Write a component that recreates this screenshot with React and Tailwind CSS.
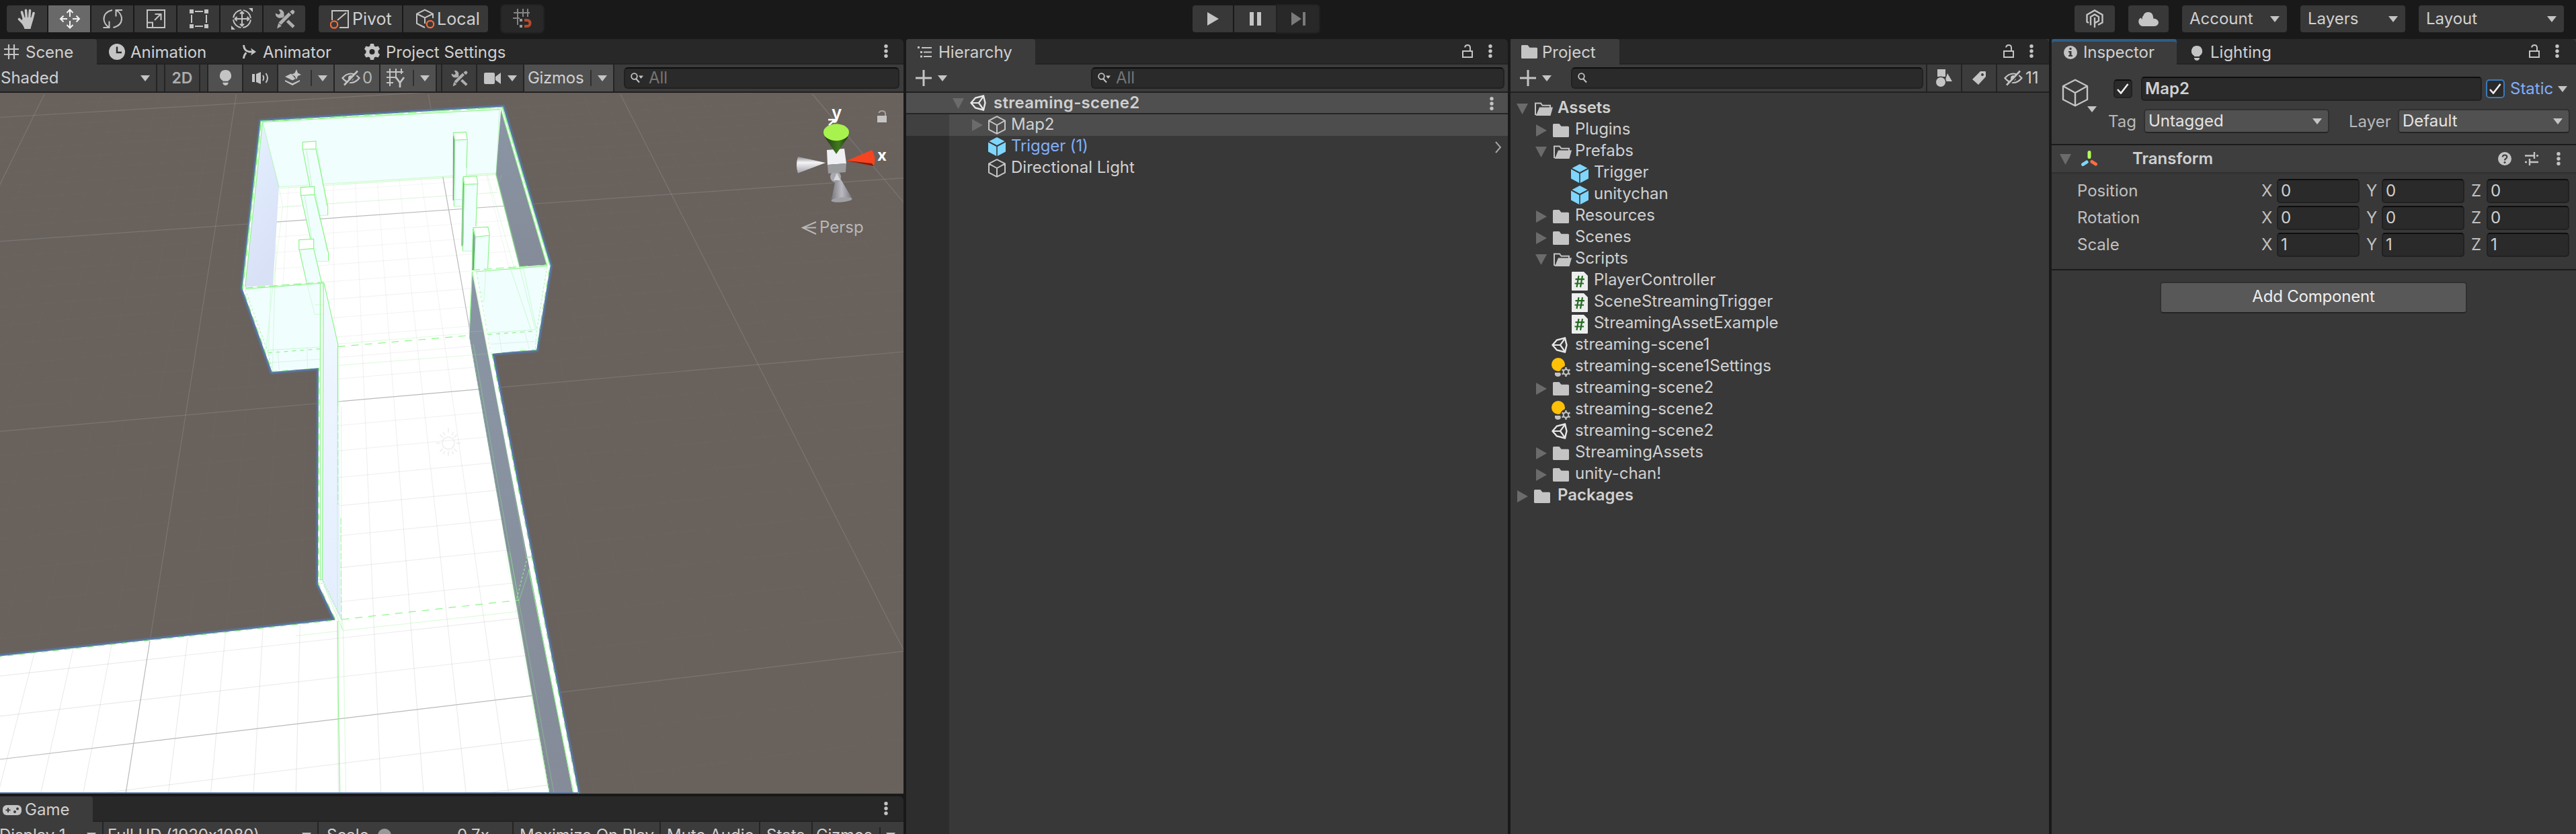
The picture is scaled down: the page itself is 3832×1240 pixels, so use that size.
import React from "react";

/* ---------- icons ---------- */
const Svg = ({ w, h, vb, className = "", children }) => (
  <svg width={w} height={h} viewBox={vb || `0 0 ${w} ${h}`} className={"shrink-0 " + className} fill="none">
    {children}
  </svg>
);
const C = "#c4c4c4";

const Down = ({ className = "" }) => (
  <Svg w={14} h={9} className={className}><path d="M0 0H14L7 9Z" fill={C} /></Svg>
);
const Dots = ({ className = "" }) => (
  <Svg w={6} h={20} className={className}>
    <circle cx="3" cy="2.7" r="2.7" fill={C} /><circle cx="3" cy="10" r="2.7" fill={C} /><circle cx="3" cy="17.3" r="2.7" fill={C} />
  </Svg>
);
const Lock = ({ className = "" }) => (
  <Svg w={16} h={20} className={className}>
    <rect x="1" y="10" width="14" height="9" stroke={C} strokeWidth="2" />
    <path d="M4 4.500C4.500 2 6 1 8 1C10.500 1 12 2.500 12 5V10" stroke={C} strokeWidth="2" />
  </Svg>
);
const FoldOpen = ({ className = "" }) => (
  <Svg w={17} h={16} className={className}><path d="M0 0H17L8.500 16Z" fill="#6b6b6b" /></Svg>
);
const FoldClosed = ({ className = "" }) => (
  <Svg w={16} h={18} className={className}><path d="M0 0L16 9L0 18Z" fill="#6b6b6b" /></Svg>
);
const Folder = ({ className = "" }) => (
  <Svg w={24} h={20} className={className}>
    <path d="M1.500 0H9.500L12.500 3.800H22.500Q24 3.800 24 5.300V18.500Q24 20 22.500 20H1.500Q0 20 0 18.500V1.500Q0 0 1.500 0Z" fill={C} />
  </Svg>
);
const FolderOpen = ({ className = "" }) => (
  <Svg w={27} h={20} className={className}>
    <path d="M1 19V1.500H9L11.500 4.800H23V8" stroke={C} strokeWidth="2" />
    <path d="M7 7.500H27L23.500 20H1.500Z" fill={C} />
    <path d="M2.600 17L6 7.500" stroke="#383838" strokeWidth="1" />
  </Svg>
);
const CubeLine = ({ w = 26, h = 28, s = 2, className = "" }) => (
  <svg width={w} height={h} viewBox="0 0 26 28" fill="none" className={"shrink-0 " + className}>
    <path d="M13 1.200L25 7.300V20.700L13 26.800L1 20.700V7.300Z M1 7.300L13 14L25 7.300 M13 14V26.800" stroke={C} strokeWidth={s} strokeLinejoin="round" />
  </svg>
);
const CubeBlue = ({ className = "" }) => (
  <Svg w={26} h={28} className={className}>
    <path d="M13 0L24.500 6L13 12L1.500 6Z M0 7.500L12.200 14V28L0 21.500Z M26 7.500L13.800 14V28L26 21.500Z" fill="#7fd6fd" />
  </Svg>
);
const UnityMark = ({ className = "" }) => (
  <Svg w={24} h={24} className={className}>
    <path d="M1.500 12L8 4.500L20 1.500L22.500 12L20 22.500L8 19.500Z" stroke="#e8e8e8" strokeWidth="2.400" />
    <path d="M1 12H13L20.500 1.500M13 12L20.500 22.500" stroke="#e8e8e8" strokeWidth="2.200" />
  </Svg>
);
const Script = ({ className = "" }) => (
  <Svg w={24} h={28} className={className}>
    <path d="M1 0H18L24 6V27Q24 28 23 28H1Q0 28 0 27V1Q0 0 1 0Z" fill="#eeeeee" />
    <path d="M10.500 6L7.500 23M16 6L13 23M5.500 11.200H19M4.500 17.500H18" stroke="#236b23" strokeWidth="2.200" />
  </Svg>
);
const BulbGear = ({ className = "" }) => (
  <Svg w={28} h={28} className={className}>
    <circle cx="10" cy="10" r="10" fill="#ffc107" />
    <path d="M5 22H14V25Q13 28 9.500 28Q6 28 5 25Z" fill={C} />
    <circle cx="21.500" cy="21" r="8.500" fill="#383838" />
    <circle cx="21.500" cy="21" r="3.800" stroke={C} strokeWidth="2" />
    <path d="M21.500 14V17M21.500 25V28M15.500 17.500L18 19M25 23L27.500 24.500M15.500 24.500L18 23M25 19L27.500 17.500" stroke={C} strokeWidth="2.400" />
  </Svg>
);
const Bulb = ({ w = 16, h = 22, className = "" }) => (
  <svg width={w} height={h} viewBox="0 0 16 22" className={"shrink-0 " + className}>
    <path d="M8 0A8 8 0 0 1 12 15V16H4V15A8 8 0 0 1 8 0ZM4 18H12V19Q11 22 8 22Q5 22 4 19Z" fill={C} />
  </svg>
);
const Plus = ({ className = "" }) => (
  <Svg w={24} h={24} className={className}><path d="M12 0V24M0 12H24" stroke={C} strokeWidth="3" /></Svg>
);
const Glass = ({ drop = false, className = "" }) => (
  <Svg w={19} h={16} className={className}>
    <circle cx="5.500" cy="5.500" r="4.300" stroke={C} strokeWidth="1.800" />
    <path d="M8 9L13 14.500" stroke={C} strokeWidth="2" />
    {drop && <path d="M12 4.500H19L15.500 9Z" fill={C} />}
  </Svg>
);
const EyeOff = ({ bg = "#505050", className = "" }) => (
  <Svg w={28} h={24} className={className}>
    <path d="M1.500 12Q7 5.500 14 5.500Q21 5.500 26.500 12Q21 19 14 19Q7 19 1.500 12Z" stroke={C} strokeWidth="2.200" />
    <circle cx="14" cy="12" r="4" fill={C} />
    <path d="M6 23.500L25.500 3" stroke={bg} strokeWidth="2.500" />
    <path d="M4 22.500L24 1.500" stroke={C} strokeWidth="2.600" />
  </Svg>
);
const Tools = ({ w = 29, h = 29, bg = "#383838", className = "" }) => (
  <svg width={w} height={h} viewBox="0 0 29 29" fill="none" className={"shrink-0 " + className}>
    <path d="M9 9L27 26" stroke="#aeaeae" strokeWidth="4.600" />
    <path d="M5.500 1.200A6.200 6.200 0 1 1 .8 6.500L5.500 8.500L8 6Z" fill="#aeaeae" />
    <path d="M26 4L6 23.500" stroke={bg} strokeWidth="8" />
    <path d="M21.500 7L7 21.500" stroke="#aeaeae" strokeWidth="5" />
    <path d="M23.500 2.500L26 1.500L28.500 4L27.500 6.500L25.500 8.500L21.500 4.500ZM5 20.500L9.500 25L3 28.500Z" fill="#aeaeae" />
  </svg>
);
const Bar = ({ className = "" }) => <div className={"w-[2px] shrink-0 self-stretch bg-[#242424] " + className} />;

/* ---------- small building blocks ---------- */
const Tab = ({ className = "", children }) => (
  <div className={"flex h-[38px] shrink-0 items-center rounded-t-[4px] bg-[#3c3c3c] " + className}>{children}</div>
);
const TabStrip = ({ className = "", children }) => (
  <div className={"flex h-[38px] shrink-0 items-start rounded-t-[6px] bg-[#282828] shadow-[inset_0_-2px_0_#232323] " + className}>{children}</div>
);
const Search = ({ className = "", children }) => (
  <div className={"flex h-[32px] items-center rounded-[6px] border-2 border-[#212121] border-t-[#0d0d0d] bg-[#2a2a2a] " + className}>{children}</div>
);
const Field = ({ className = "", children }) => (
  <div className={"flex items-center rounded-[5px] border-2 border-[#212121] border-t-[#0d0d0d] bg-[#2a2a2a] " + className}>{children}</div>
);
const Tool = ({ className = "", children }) => (
  <div className={"flex h-[40px] items-center justify-center " + className}>{children}</div>
);
const TopMenu = ({ className = "", children }) => (
  <div className={"flex h-[40px] items-center justify-between rounded-[4px] bg-[#383838] px-[11px] " + className}>
    <span>{children}</span><Down />
  </div>
);

/* ---------- top toolbar ---------- */
function TopBar() {
  return (
    <div className="flex h-[58px] shrink-0 items-start bg-[#191919] pt-[8px]">
      <div className="ml-[10px] flex w-[444px] shrink-0 gap-[2px]">
        <Tool className="w-[60px] rounded-l-[4px] bg-[#383838]">
          <Svg w={28} h={30} className="-mt-px">
            <g stroke={C} strokeWidth="3.600" strokeLinecap="round"><path d="M6.500 5L10 17M12.500 2.300L13.500 15M18.500 2.500L17.500 15M24 6.500L21 18M2.500 15.500L9 22" /></g>
            <path d="M8.500 13H22.500L22 21Q20 27 19.500 30H10.500Q9.500 26 5 20Z" fill={C} />
          </Svg>
        </Tool>
        <Tool className="w-[62px] bg-[#696969]">
          <Svg w={32} h={30} className="ml-[2px]">
            <path d="M16 2V12M16 18V28M2 15H12M20 15H30M11.500 6L16 1.500L20.500 6M11.500 24L16 28.500L20.500 24M6.500 10.500L2 15L6.500 19.500M25.500 10.500L30 15L25.500 19.500" stroke="#f2f2f2" strokeWidth="2" />
          </Svg>
        </Tool>
        <Tool className="w-[62px] bg-[#383838]">
          <Svg w={30} h={28} className="ml-[2px]">
            <path d="M14 1Q1.500 4 1.500 14.500Q2 22 9 26.500M15.500 27Q28 24 28 13.500Q27.500 6 20.500 1.500M.5 27H9.500V17.500M29 1H19.500V10.500" stroke={C} strokeWidth="2" />
          </Svg>
        </Tool>
        <Tool className="w-[62px] bg-[#383838]">
          <Svg w={28} h={28} className="ml-[2px]">
            <path d="M1 1H27V27H1ZM1 19.500H9V27M12 16L21 7M12.500 7H21.500V16" stroke={C} strokeWidth="2" />
          </Svg>
        </Tool>
        <Tool className="w-[62px] bg-[#383838]">
          <Svg w={28} h={28} className="ml-[2px]">
            <path d="M0 0H6V6H0ZM22 0H28V6H22ZM0 22H6V28H0ZM22 22H28V28H22Z" fill={C} />
            <path d="M8 3H20M8 25H20M3 8V20M25 8V20" stroke={C} strokeWidth="2" />
          </Svg>
        </Tool>
        <Tool className="w-[62px] bg-[#383838]">
          <Svg w={32} h={32} className="ml-[2px]">
            <circle cx="16" cy="16" r="13" stroke={C} strokeWidth="2" strokeDasharray="17.400 3" strokeDashoffset="-1.500" />
            <path d="M16 6V26M6 16H26M13 8.500L16 5.500L19 8.500M13 23.500L16 26.500L19 23.500M8.500 13L5.500 16L8.500 19M23.500 13L26.500 16L23.500 19" stroke={C} strokeWidth="2" />
            <path d="M26 0H32V6ZM0 26V32H6Z" fill={C} />
          </Svg>
        </Tool>
        <Tool className="w-[62px] rounded-r-[4px] bg-[#383838]"><Tools w={30} h={30} className="ml-[2px]" /></Tool>
      </div>
      <div className="ml-[20px] flex shrink-0 gap-[2px]">
        <Tool className="w-[124px] rounded-l-[4px] bg-[#383838] text-[25px] leading-[40px]">
          <Svg w={30} h={29} className="ml-[3px]">
            <path d="M3 16V2H27V27H14M11 16L24 5" stroke={C} strokeWidth="2" />
            <circle cx="6" cy="22.500" r="5.200" stroke="#f76b3c" strokeWidth="2.200" />
          </Svg>
          <span className="ml-[3px] w-[60px]">Pivot</span>
        </Tool>
        <Tool className="w-[126px] rounded-r-[4px] bg-[#383838] text-[25px] leading-[40px]">
          <Svg w={30} h={30} className="ml-[4px]">
            <path d="M14 28L2 22V7.500L14 1.500L26 7.500V14M2 7.500L14 13.500L26 7.500M14 13.500V22" stroke={C} strokeWidth="2" />
            <circle cx="22" cy="23" r="5.200" stroke="#f76b3c" strokeWidth="2.200" />
          </Svg>
          <span className="ml-[2px] w-[62px]">Local</span>
        </Tool>
      </div>
      <Tool className="ml-[20px] w-[62px] rounded-[5px] bg-[#282828] shadow-[0_0_0_2px_#212121]">
        <Svg w={28} h={30}>
          <path d="M7 0V24M15 0V12M22 0V12M1 6H25M0 14H10" stroke="#848484" strokeWidth="2" />
          <path d="M17 17H20.500Q25.500 17 25.500 21.500Q25.500 26 20.500 26H17" stroke="#b5492d" strokeWidth="4" />
          <path d="M10 15H14V19H10ZM10 24H14V28H10Z" fill="#9a9a9a" />
        </Svg>
      </Tool>

      <div className="ml-[966px] flex shrink-0 gap-[2px]">
        <Tool className="w-[60px] rounded-l-[4px] bg-[#383838]"><Svg w={17} h={20}><path d="M0 0L17 10L0 20Z" fill={C} /></Svg></Tool>
        <Tool className="w-[62px] bg-[#383838]"><Svg w={17} h={20}><path d="M0 0H6V20H0ZM11 0H17V20H11Z" fill={C} /></Svg></Tool>
        <Tool className="w-[62px] rounded-r-[4px] bg-[#282828] shadow-[0_0_0_2px_#212121]"><Svg w={21} h={20}><path d="M0 0L15 10L0 20ZM17 0H21V20H17Z" fill="#7a7a7a" /></Svg></Tool>
      </div>

      <div className="ml-auto mr-[18px] flex shrink-0 gap-[20px]">
        <Tool className="w-[60px] rounded-[4px] bg-[#383838]">
          <Svg w={26} h={28}>
            <path d="M4 20L1.500 18.500V8L13 1.500L24.500 8V19.500L18 23M7 23.500V11L13 7.500L19 11V17L13 20.500V27M13 20.500V12" stroke={C} strokeWidth="2.400" />
          </Svg>
        </Tool>
        <Tool className="w-[60px] rounded-[4px] bg-[#383838]">
          <Svg w={30} h={21}><path d="M7 21A7 7 0 0 1 3 8.500Q5 9 6 11Q5 7 7.500 5Q9 0 15 0Q21 0 22 7Q22.500 8.500 22 9.500Q30 10 30 16Q29 21 23 21Z" fill={C} /></Svg>
        </Tool>
        <TopMenu className="w-[156px]">Account</TopMenu>
        <TopMenu className="w-[156px]">Layers</TopMenu>
        <TopMenu className="w-[216px]">Layout</TopMenu>
      </div>
    </div>
  );
}

/* ---------- scene drawing ---------- */
const longitudes = Array.from({ length: 62 }, (_, i) => i - 16).map((k) => ({
  major: k % 10 === 0, x1: 410 + 33.3 * k, y1: 0, x2: 218 + 73.8 * k, y2: 1568,
}));
const latitudes = Array.from({ length: 38 }, (_, i) => (i - 1) / 10).map((k, i) => ({
  major: (i - 1) % 10 === 0,
  x1: 0, y1: (52 + 220.7 * k) / (1 - 0.1737 * k),
  x2: 1567, y2: (-66.8 + 222 * k) / (1 - 0.1734 * k),
}));
const gridLines = [...longitudes, ...latitudes];

const Poly = ({ p, ...rest }) => <polygon points={p} vectorEffect="non-scaling-stroke" {...rest} />;
const Edge = ({ d, o = 1, dash, w = 1.2 }) => (
  <path d={d} stroke="#8df58a" strokeWidth={w} opacity={o} strokeDasharray={dash} fill="none" vectorEffect="non-scaling-stroke" />
);
const GRAY = "url(#grayWall)";
const ICE = "#f1fefe";

function SceneView() {
  const outline = "453,61 872,29 954,385 930,573 853,580 1003,1569 -4,1569 -4,1261 582,1179 552,1098 553,613 472,622 421,437";
  return (
    <div className="relative h-[1042px] w-[1344px] shrink-0 overflow-hidden bg-[#69615c]">
      <svg width="1344" height="1042" viewBox="0 -3 1567 1571" preserveAspectRatio="none" className="block">
        <defs>
          <clipPath id="floor">
            <polygon points="482,209 862,178 902,385 820,398 815,545 953,1568 0,1568 0,1262 582,1180 590,1178 586,566 560,424 474,430" />
          </clipPath>
          <linearGradient id="gridFade" gradientUnits="userSpaceOnUse" x1="0" y1="180" x2="0" y2="1568">
            <stop offset="0" stopColor="#000" stopOpacity="0.035" /><stop offset="0.5" stopColor="#000" stopOpacity="0.065" /><stop offset="1" stopColor="#000" stopOpacity="0.09" />
          </linearGradient>
          <linearGradient id="leftWall" x1="0" y1="0" x2="0.3" y2="1">
            <stop offset="0" stopColor="#e9f6ff" /><stop offset="0.4" stopColor="#e0eafd" /><stop offset="1" stopColor="#d8e1f5" />
          </linearGradient>
          <linearGradient id="hall" x1="0" y1="0" x2="0" y2="1">
            <stop offset="0" stopColor="#f2fdff" /><stop offset="0.3" stopColor="#ecf5ff" /><stop offset="1" stopColor="#e4edfe" />
          </linearGradient>
          <linearGradient id="grayWall" x1="0" y1="0" x2="0" y2="1">
            <stop offset="0" stopColor="#8a96a5" /><stop offset="1" stopColor="#858b98" />
          </linearGradient>
        </defs>
        <g>
          {gridLines.map((l, i) => (
            <line key={i} x1={l.x1} y1={l.y1} x2={l.x2} y2={l.y2} stroke="#8a8b8a" strokeWidth={l.major ? 1.2 : 1} opacity={l.major ? 0.5 : 0.07} vectorEffect="non-scaling-stroke" />
          ))}
        </g>
        <Poly p={outline} fill="#fff" stroke="#5b769f" strokeWidth="9" strokeLinejoin="round" opacity="0.35" />
        <Poly p={outline} fill="#fff" stroke="#5875a2" strokeWidth="6.500" strokeLinejoin="round" />
        <Poly p={outline} fill="#fff" stroke="#fff" strokeWidth="0.800" />
        <Poly p={outline} fill="none" stroke="#7fe07c" strokeWidth="1.300" strokeDasharray="9 8" />

        <g clipPath="url(#floor)">
          {gridLines.map((l, i) => (
            <line key={i} x1={l.x1} y1={l.y1} x2={l.x2} y2={l.y2} stroke={l.major ? "#b9b9b9" : "url(#gridFade)"} strokeWidth={l.major ? 1.2 : 1.1} vectorEffect="non-scaling-stroke" />
          ))}
        </g>

        {/* upper room */}
        <g transform="matrix(0.3886 0 0 0.50257 408.03 15.08)">
          <Poly p="122,94 1180,38 1165,322 195,384" fill={ICE} />
          <Poly p="122,100 195,384 168,822 44,830" fill="url(#leftWall)" />
          <Poly p="1186,42 1390,732 1268,740 1163,328" fill={GRAY} />
          <Edge d="M195 384L1165 322M200 390L1165 328" o={0.4} />
          <Edge d="M210 472L1168 408M195 384L212 472L170 820M1165 322L1345 1020M1125 330L1325 1020M1163 400L1190 330" o={0.2} />
          <Edge d="M122 94L195 384M1180 38L1165 322" o={0.5} />
          <Edge d="M1163 328L1268 738" o={0.7} />
          <Edge d="M112 90L1192 30" dash="13 9" />
          <Edge d="M122 94L1180 38M122 94L44 830M114 90L32 836M1185 35L1392 735M1192 30L1406 738" />

          <Poly p="301,184 360,180 360,214 301,216" fill="#fff" />
          <Poly p="302,216 360,214 412,510 361,511" fill={ICE} />
          <Edge d="M301 184L360 180V214L300 216ZM301 216L334 384M360 214L413 470V510" />
          <Edge d="M318 220L361 511H412M366 214L408 470" o={0.4} />
          <Poly p="292,422 353,418 416,713 358,716 335,616" fill={ICE} />
          <Poly p="292,386 353,382 353,418 292,422" fill="#fff" />
          <Edge d="M292 386L353 382V418L293 422ZM293 422L336 616M353 418L416 680V713" />
          <Edge d="M310 424L358 716H416M358 414L410 670" o={0.4} />
          <Poly p="286,664 350,658 385,808 318,808" fill={ICE} />
          <Poly p="284,620 350,616 350,658 285,664" fill="#fff" />
          <Edge d="M284 620L350 616V658L285 664ZM286 664L318 808M350 658L385 808" />

          <Poly p="980,175 1036,172 1030,466 976,470" fill={ICE} />
          <Poly p="973,142 1030,139 1036,172 980,175" fill="#fff" />
          <Poly p="972,150 980,175 978,440 971,445" fill={GRAY} />
          <Edge d="M973 142L1030 139L1036 172L980 175ZM980 175L976 470M1036 172L1032 300" />
          <Edge d="M976 470H1012M1032 300L1028 466M976 440H1010" o={0.45} />
          <Poly p="1022,373 1083,370 1068,668 1015,670" fill={ICE} />
          <Poly p="1018,338 1077,335 1083,370 1022,373" fill="#fff" />
          <Poly p="1015,340 1022,373 1018,640 1010,650" fill={GRAY} />
          <Edge d="M1018 338L1077 335L1083 370L1022 373ZM1022 373L1015 670M1081 370L1074 560M1016 345L1010 640" />
          <Edge d="M1015 670H1058" o={0.45} />
          <Poly p="1072,607 1136,600 1125,748 1062,755" fill={ICE} />
          <Poly p="1062,566 1128,562 1136,600 1072,607" fill="#fff" />
          <Poly p="1060,570 1070,607 1066,752 1056,755" fill={GRAY} />
          <Edge d="M1062 566L1128 562L1136 600L1072 607ZM1072 607L1066 750M1134 600L1127 748M1061 570L1057 750" />

          <Poly p="44,838 380,816 378,1190 165,1205" fill={ICE} />
          <Poly p="1072,762 1392,736 1345,1105 1145,1128" fill={ICE} />
          <Edge d="M318 808L355 952H414M385 808L414 948M355 910H412" o={0.25} />
          <Edge d="M1118 752L1110 894H1068M1060 855H1108" o={0.25} />
          <Edge d="M168 822L137 1110M158 830L148 1120M182 640L166 1200" o={0.25} />
          <Edge d="M1268 738L1340 1020M1283 738L1345 1020M1225 738L1320 1020" o={0.3} />
          <Edge d="M44 834L396 808" dash="12 6" /><Edge d="M46 838L396 813" />
          <Edge d="M1056 755L1392 731" dash="12 6" /><Edge d="M1072 762L1392 736" />
          <Edge d="M44 842L146 1122L165 1205M1392 740L1345 1025L1340 1108" o={0.6} dash="3 3" />
          <Edge d="M146 1112L378 1098M1128 1035L1340 1020" o={0.35} />
          <Edge d="M146 1124L378 1106M1128 1042L1340 1027" dash="6 6" />
          <path d="M190 1110L196 1200M320 1100L323 1190M150 1168L378 1152M1175 1030L1190 1120M1290 1022L1312 1108M1140 1085L1345 1072" stroke="#000" opacity="0.06" vectorEffect="non-scaling-stroke" />
        </g>

        {/* corridor */}
        <Poly p="561,426 586,566 591,1178 558,1092" fill="url(#hall)" />
        <Poly p="819,400 814,545 953,1569 994,1569" fill={GRAY} />
        <Edge d="M555.500 424V1090M561 424L559 1090M562 424L586 560V700" />
        <Edge d="M586 700V920M591 950L592 1178" o={0.7} dash="10 3" />
        <Edge d="M585 570V1170M592 700V1200" o={0.25} />
        <Edge d="M586 566L814 541" dash="11 9" />
        <Edge d="M586 608L845 582M586 560L814 536M814 533L845 530" o={0.25} />
        <Edge d="M819 398L814 535" />
        <Edge d="M814 540L894 1134M827 400L851 580" o={0.5} dash="3 4" />
        <Edge d="M821 560L900 1140M820 398L913 1040" o={0.35} />
        <g transform="matrix(0.3886 0 0 0.50257 512.95 1025.2)">
          <Edge d="M1034 25L985 215" dash="3 3" />
          <Edge d="M1030 25H1052M985 217H998" />
          <Edge d="M1044 75L998 215" o={0.4} />
          <Edge d="M205 303L985 218" dash="11 9" />
          <Edge d="M210 353L985 268L998 225M0 376L188 355" o={0.28} />
          <Edge d="M188 310L190 650L197 1080" />
          <Edge d="M207 300L212 353L224 1080" o={0.28} />
          <Edge d="M118 122L205 303M100 125H120M100 142H118" o={0.8} dash="2 2" />
          <Edge d="M125 150L210 350" o={0.4} />
          <Edge d="M955 0L1153 1080" o={0.32} />
          <Edge d="M945 0L985 215L1055 640" o={0.3} />
          <Edge d="M1040 80L1240 1080" />
          <Edge d="M1055 640L1133 1080" dash="4 3" />
          <Edge d="M935 0L1125 1060" o={0.15} />
        </g>
        <rect x="0" y="1565" width="1003" height="4" fill="#5b78a5" />
      </svg>

      <svg width="40" height="44" viewBox="0 0 44 48" className="absolute left-[647px] top-[498px] opacity-45" fill="none" stroke="#e0e0e0" strokeWidth="2">
        <circle cx="22" cy="25" r="10" />
        <path d="M22 0V8M22 38V46M2 25H9M35 25H42M8 11L13 16M31 34L36 39M36 11L31 16M13 34L8 39M14 7L16 12M30 7L28 12M14 43L16 38M30 43L28 38" />
      </svg>

      <svg width="164" height="200" viewBox="1180 155 164 200" className="absolute left-[1180px] top-[17px]" fill="none">
        <defs>
          <linearGradient id="coneL" x1="0" y1="0" x2="0" y2="1"><stop offset="0" stopColor="#8d8d93" /><stop offset=".35" stopColor="#f4f4f6" /><stop offset="1" stopColor="#a2a2a8" /></linearGradient>
          <linearGradient id="coneD" x1="0" y1="0" x2="1" y2="0"><stop offset="0" stopColor="#77777d" /><stop offset=".5" stopColor="#babac0" /><stop offset="1" stopColor="#77777d" /></linearGradient>
          <linearGradient id="coneG" x1="0" y1="0" x2="1" y2="0"><stop offset="0" stopColor="#1f3a10" /><stop offset=".6" stopColor="#417a22" /><stop offset="1" stopColor="#1c340f" /></linearGradient>
        </defs>
        <path d="M1232 178H1242L1233 186" stroke="#fff" strokeWidth="2.500" />
        <circle cx="1243" cy="263" r="8" fill="#a8a8ae" />
        <path d="M1245 257L1236.500 298Q1252 303 1267.500 295Z" fill="url(#coneD)" />
        <ellipse cx="1252" cy="297" rx="15.500" ry="3.500" fill="#a0a0a4" transform="rotate(-5 1252 297)" />
        <path d="M1228 242L1187 233Q1183 245 1187 257.500Z" fill="url(#coneL)" />
        <path d="M1230 223L1256 221L1259 243L1231 245Z" fill="#eef0f4" />
        <path d="M1231 245L1259 243L1258 256L1232 258Z" fill="#9a9b9d" />
        <path d="M1245 257L1240 268H1250Z" fill="#d8d8dc" />
        <path d="M1226.500 203L1244 229L1262 203Z" fill="url(#coneG)" />
        <ellipse cx="1244" cy="196.700" rx="19" ry="12.500" fill="#a8f24e" />
        <path d="M1259.500 239L1297 223Q1304 234 1300 247Z" fill="#f5441f" />
        <path d="M1259.500 239L1300 247L1297 243Z" fill="#7c1d0c" />
        <rect x="1305" y="172" width="14" height="10" fill="#c4c4c4" />
        <path d="M1307.500 168Q1308 165 1312 165Q1317 165 1317 169V172" stroke="#a4a4a4" strokeWidth="2" />
        <path d="M1214 330L1194 338.500L1214 348M1194 338.500H1214" stroke="#b8b8b8" strokeWidth="2" />
      </svg>
      <span className="absolute left-[1237px] top-[14px] text-[26px] font-semibold leading-[32px] text-white">y</span>
      <span className="absolute left-[1305px] top-[78px] text-[24px] font-bold leading-[30px] text-white">x</span>
      <span className="absolute left-[1219px] top-[185px] leading-[30px] text-[#b8b8b8]">Persp</span>
    </div>
  );
}

function ScenePanel() {
  return (
    <div className="flex h-full w-[1344px] shrink-0 flex-col">
      <TabStrip className="w-[1344px] rounded-tl-none">
        <Tab className="w-[144px] rounded-tl-none">
          <Svg w={22} h={22} className="ml-[6px]"><path d="M7 0V22M15 0V22M0 7H22M0 15H22" stroke={C} strokeWidth="2.200" /></Svg>
          <span className="ml-[10px] mt-[2px]">Scene</span>
        </Tab>
        <div className="flex h-[38px] w-[217px] items-center">
          <Svg w={24} h={24} className="ml-[18px]"><circle cx="12" cy="12" r="12" fill={C} /><path d="M12 4.500V13H19" stroke="#282828" strokeWidth="2.400" /></Svg>
          <span className="ml-[8px] mt-[2px]">Animation</span>
        </div>
        <div className="flex h-[38px] w-[180px] items-center">
          <Svg w={21} h={20}><path d="M1.500 0Q2 9 10 10H14M1.500 20Q2 14 5.500 11.500" stroke={C} strokeWidth="2.800" /><path d="M12 4.500L20 10L12 15.500L14 10Z" fill={C} /></Svg>
          <span className="ml-[9px] mt-[2px]">Animator</span>
        </div>
        <div className="flex h-[38px] items-center">
          <Svg w={25} h={24} vb="0 0 24 24"><path fillRule="evenodd" d="M9.500 0H14.500L15.300 3.500L17.500 4.600L21 3.500L23.500 7.800L21 10.500V13.500L23.500 16.200L21 20.500L17.500 19.400L15.300 20.500L14.500 24H9.500L8.700 20.500L6.500 19.400L3 20.500L.5 16.200L3 13.500V10.500L.5 7.800L3 3.500L6.500 4.600L8.700 3.500ZM12 8A4 4 0 1 0 12 16A4 4 0 1 0 12 8Z" fill={C} /></Svg>
          <span className="ml-[8px] mt-[2px]">Project Settings</span>
        </div>
        <Dots className="ml-auto mr-[23px] mt-[8px]" />
      </TabStrip>

      <div className="flex h-[42px] shrink-0 items-center border-b-2 border-[#202020] bg-[#3c3c3c]">
        <div className="flex w-[232px] shrink-0 items-center justify-between pr-[9px]"><span className="ml-px">Shaded</span><Down /></div>
        <Bar /><div className="w-[10px] shrink-0" /><Bar />
        <div className="flex w-[50px] shrink-0 items-center justify-center text-[23px] font-semibold text-[#adadad]">2D</div>
        <Bar /><div className="w-[10px] shrink-0" /><Bar />
        <Tool className="w-[50px] shrink-0 bg-[#505050]"><Bulb w={17} h={23} className="-mt-px" /></Tool>
        <Bar />
        <Tool className="w-[50px] shrink-0">
          <Svg w={25} h={18}><path d="M0 3H4V15H0ZM6 3L13 0V18L6 15Z" fill={C} /><path d="M16 5Q18.500 9 16 13M20.500 2Q25.500 9 20.500 16" stroke={C} strokeWidth="2" /></Svg>
        </Tool>
        <Bar />
        <div className="flex h-[40px] w-[82px] shrink-0 items-center bg-[#505050]">
          <Svg w={26} h={24} className="-mt-[2px] ml-[9px]">
            <path d="M1 16L12 21L23 16V18L12 24L1 18Z" fill={C} />
            <path d="M1 11L10 6.500L12 9L14 11L16 14L21 12L12 16.500Z" fill={C} />
            <path d="M18 0L20 5.500L25 8L20 10L18 15L15.500 10L10.500 8L15.500 5.500Z" fill={C} />
          </Svg>
          <div className="ml-[13px] h-[24px] w-[2px] bg-[#303030]" /><Down className="ml-[9px]" />
        </div>
        <Bar />
        <Tool className="w-[66px] shrink-0 gap-[3px] bg-[#505050] text-[#b4b4b4]"><EyeOff /><span>0</span></Tool>
        <Bar />
        <div className="flex h-[40px] w-[82px] shrink-0 items-center bg-[#505050]">
          <Svg w={28} h={28} className="ml-[9px]">
            <path d="M5 0V26M14 0V15M22 0V8M0 5H25M0 13H13M0 21H10" stroke={C} strokeWidth="2" />
            <path d="M14 13L20 21L26 13M20 21V28" stroke={C} strokeWidth="2.800" />
          </Svg>
          <div className="ml-[11px] h-[24px] w-[2px] bg-[#303030]" /><Down className="ml-[9px]" />
        </div>
        <Bar /><div className="w-[6px] shrink-0" /><Bar />
        <Tool className="w-[50px] shrink-0"><Tools w={25} h={25} bg="#3c3c3c" /></Tool>
        <Bar />
        <Tool className="w-[68px] shrink-0">
          <Svg w={25} h={17}><rect width="16" height="17" rx="2" fill={C} /><path d="M17 6L25 0V17L17 11Z" fill={C} /></Svg>
          <Down className="ml-[10px]" />
        </Tool>
        <Bar />
        <div className="flex h-[40px] w-[132px] shrink-0 items-center bg-[#505050]">
          <span className="ml-[5px] w-[86px] tracking-[-0.3px]">Gizmos</span>
          <div className="ml-[7px] h-[24px] w-[2px] bg-[#303030]" /><Down className="ml-[9px]" />
        </div>
        <Bar />
        <Search className="ml-[14px] w-[410px]"><Glass drop className="ml-[8px]" /><span className="ml-[8px] text-[#757575]">All</span></Search>
      </div>

      <SceneView />

      <div className="h-[4px] shrink-0 bg-[#191919]" />
      <TabStrip className="w-[1344px] rounded-tl-none">
        <Tab className="w-[138px] rounded-tl-none">
          <Svg w={28} h={15} className="ml-[4px] mt-[2px]">
            <rect width="28" height="15" rx="6" fill={C} />
            <path d="M8 4V11M4.500 7.500H11.500" stroke="#3c3c3c" strokeWidth="2" /><circle cx="18" cy="10" r="2" fill="#3c3c3c" /><circle cx="22" cy="5.500" r="2" fill="#3c3c3c" />
          </Svg>
          <span className="ml-[5px] mt-[2px]">Game</span>
        </Tab>
        <Dots className="ml-auto mr-[23px] mt-[8px]" />
      </TabStrip>
      <div className="flex h-[40px] shrink-0 items-center bg-[#3c3c3c]">
        <div className="flex w-[152px] shrink-0 items-center justify-between pr-[9px]"><span className="-ml-px tracking-[-0.1px]">Display 1</span><Down /></div>
        <Bar />
        <div className="flex w-[318px] shrink-0 items-center justify-between pl-[6px] pr-[9px]"><span className="tracking-[-0.1px]">Full HD (1920x1080)</span><Down /></div>
        <Bar />
        <div className="flex w-[288px] shrink-0 items-center pl-[12px]">
          <span className="w-[61px]">Scale</span>
          <div className="ml-[15px] size-[20px] rounded-full bg-[#999999]" />
          <span className="ml-[98px]">0.7x</span>
        </div>
        <Bar />
        <div className="w-[217px] shrink-0 whitespace-nowrap pl-[9px] tracking-[-0.1px]">Maximize On Play</div><Bar />
        <div className="w-[146px] shrink-0 whitespace-nowrap pl-[9px]">Mute Audio</div><Bar />
        <div className="w-[76px] shrink-0 whitespace-nowrap pl-[9px]">Stats</div><Bar />
        <div className="flex shrink-0 items-center pl-[5px]"><span className="w-[86px] tracking-[-0.3px]">Gizmos</span><div className="ml-[8px] h-[24px] w-[2px] bg-[#242424]" /><Down className="ml-[8px]" /></div>
      </div>
    </div>
  );
}

/* ---------- hierarchy ---------- */
function HierarchyPanel() {
  return (
    <div className="flex h-full w-[895px] shrink-0 flex-col">
      <TabStrip>
        <Tab className="w-[192px]">
          <Svg w={21} h={17} className="ml-[17px]"><path d="M6 2H21M9 8.500H21M9 15H21" stroke={C} strokeWidth="2" /><path d="M0 0H3V3H0ZM4 7H7V10H4ZM4 13.500H7V16.500H4Z" fill={C} /></Svg>
          <span className="ml-[10px] mt-[2px]">Hierarchy</span>
        </Tab>
        <Lock className="ml-auto mt-[8px]" /><Dots className="ml-[23px] mr-[23px] mt-[8px]" />
      </TabStrip>
      <div className="flex h-[42px] shrink-0 items-center border-b-2 border-[#202020] bg-[#3c3c3c]">
        <Plus className="ml-[14px]" /><Down className="ml-[9px]" />
        <Search className="ml-[214px] w-[615px]"><Glass drop className="ml-[8px]" /><span className="ml-[8px] text-[#757575]">All</span></Search>
      </div>
      <div className="flex h-[32px] shrink-0 items-center border-b-2 border-[#252525] bg-[#4f4f4f]">
        <FoldOpen className="ml-[69px] mt-[2px]" /><UnityMark className="ml-[9px]" />
        <span className="-mt-px ml-[11px] font-semibold tracking-[0.3px]">streaming-scene2</span>
        <Dots className="ml-auto mr-[21px] mt-[2px]" />
      </div>
      <div className="flex min-h-0 flex-1">
        <div className="w-[64px] shrink-0 bg-[#2d2d2d]"><div className="h-[32px] bg-[#404040]" /></div>
        <div className="flex-1 bg-[#383838]">
          <div className="flex h-[32px] items-center bg-[#4d4d4d]"><FoldClosed className="ml-[34px]" /><CubeLine className="ml-[8px]" /><span className="-mt-[3px] ml-[8px]">Map2</span></div>
          <div className="flex h-[32px] items-center">
            <CubeBlue className="ml-[58px]" /><span className="-mt-[3px] ml-[8px] tracking-[-0.1px] text-[#80aefb]">Trigger (1)</span>
            <Svg w={12} h={18} className="ml-auto mr-[8px] mt-[2px]"><path d="M2 1L9 9L2 17" stroke="#a4a4a4" strokeWidth="2" /></Svg>
          </div>
          <div className="flex h-[32px] items-center"><CubeLine className="ml-[58px]" /><span className="-mt-[3px] ml-[8px]">Directional Light</span></div>
        </div>
      </div>
    </div>
  );
}

/* ---------- project ---------- */
const tree = [
  { n: "Assets", d: 0, k: "open", b: true }, { n: "Plugins", d: 1, k: "dir" }, { n: "Prefabs", d: 1, k: "open" },
  { n: "Trigger", d: 2, k: "prefab" }, { n: "unitychan", d: 2, k: "prefab" }, { n: "Resources", d: 1, k: "dir" },
  { n: "Scenes", d: 1, k: "dir" }, { n: "Scripts", d: 1, k: "open" }, { n: "PlayerController", d: 2, k: "cs" },
  { n: "SceneStreamingTrigger", d: 2, k: "cs" }, { n: "StreamingAssetExample", d: 2, k: "cs" },
  { n: "streaming-scene1", d: 1, k: "scene" }, { n: "streaming-scene1Settings", d: 1, k: "light" },
  { n: "streaming-scene2", d: 1, k: "dir" }, { n: "streaming-scene2", d: 1, k: "light" },
  { n: "streaming-scene2", d: 1, k: "scene" }, { n: "StreamingAssets", d: 1, k: "dir" },
  { n: "unity-chan!", d: 1, k: "dir" }, { n: "Packages", d: 0, k: "dir", b: true },
];
const indent = ["pl-[9px]", "pl-[37px]", "pl-[65px]"];

function TreeRow({ n, d, k, b }) {
  return (
    <div className={"flex h-[32px] items-center " + indent[d]}>
      <div className="flex w-[17px] justify-center">
        {k === "open" && <FoldOpen />}
        {k === "dir" && <FoldClosed />}
      </div>
      <div className="flex w-[42px] shrink-0 items-center">
        {k === "open" && <FolderOpen className="ml-[10px]" />}
        {k === "dir" && <Folder className="ml-[9px]" />}
        {k === "prefab" && <CubeBlue className="ml-[8px]" />}
        {k === "cs" && <Script className="-mt-px ml-[9px]" />}
        {k === "scene" && <UnityMark className="-mt-[3px] ml-[7px]" />}
        {k === "light" && <BulbGear className="ml-[7px]" />}
      </div>
      <span className={b ? "-mt-[4px] ml-[2px] font-semibold" : "-mt-[4px] tracking-[-0.05px]"}>{n}</span>
    </div>
  );
}

function ProjectPanel() {
  return (
    <div className="flex h-full w-[801px] shrink-0 flex-col bg-[#383838]">
      <TabStrip>
        <Tab className="w-[162px]"><Folder className="ml-[16px]" /><span className="ml-[7px] mt-[2px]">Project</span></Tab>
        <Lock className="ml-auto mt-[8px]" /><Dots className="ml-[23px] mr-[23px] mt-[8px]" />
      </TabStrip>
      <div className="flex h-[42px] shrink-0 items-center border-b-2 border-[#202020] bg-[#3c3c3c]">
        <Plus className="ml-[14px]" /><Down className="ml-[9px]" />
        <Search className="ml-[29px] w-[524px]"><Glass className="ml-[8px]" /></Search>
        <Bar className="ml-[4px]" />
        <Tool className="w-[50px] shrink-0">
          <Svg w={24} h={26}><path d="M2 0H14V11H2Z" fill={C} /><path d="M17 6L24 18H13Z" fill={C} /><circle cx="7" cy="19" r="8.500" fill="#3c3c3c" /><circle cx="7" cy="19" r="7" fill={C} /></Svg>
        </Tool>
        <Bar />
        <Tool className="w-[50px] shrink-0">
          <Svg w={20} h={20}><path d="M12 0H19Q20 0 20 1V8L9 20L0 12Z" fill={C} /><circle cx="15" cy="5" r="2" fill="#3c3c3c" /></Svg>
        </Tool>
        <Bar />
        <Tool className="ml-[10px] gap-[4px]"><EyeOff bg="#3c3c3c" /><span>11</span></Tool>
      </div>
      <div className="pt-[8px]">{tree.map((t, i) => <TreeRow key={i} {...t} />)}</div>
    </div>
  );
}

/* ---------- inspector ---------- */
const Check = () => <Svg w={18} h={16}><path d="M1 9L6 14.500L16.500 1" stroke="#f0f0f0" strokeWidth="2.600" /></Svg>;

function VectorRow({ label, value }) {
  return (
    <div className="flex h-[40px] items-center">
      <span className="ml-[38px] w-[275px] text-[#c0c0c0]">{label}</span>
      {["X", "Y", "Z"].map((a) => (
        <div key={a} className="mr-[10px] flex w-[146px] items-center">
          <span className="w-[23px] text-[#c0c0c0]">{a}</span>
          <Field className="h-[36px] w-[123px] pl-[4px]">{value}</Field>
        </div>
      ))}
    </div>
  );
}

function InspectorPanel() {
  return (
    <div className="flex h-full w-[780px] shrink-0 flex-col bg-[#383838]">
      <TabStrip>
        <Tab className="w-[186px] overflow-hidden shadow-[inset_0_4px_0_#2c5d87]">
          <Svg w={20} h={20} className="ml-[18px] mt-[2px]"><circle cx="10" cy="10" r="10" fill={C} /><path d="M8.500 3H11.500V6H8.500ZM7 8H11.500V14H13V16H7V14H8.500V10H7Z" fill="#3c3c3c" /></Svg>
          <span className="ml-[9px] mt-[2px] tracking-[-0.1px]">Inspector</span>
        </Tab>
        <div className="flex h-[38px] items-center"><Bulb className="ml-[22px] mt-[4px]" /><span className="ml-[12px] mt-[2px]">Lighting</span></div>
        <Lock className="ml-auto mt-[8px]" /><Dots className="ml-[23px] mr-[25px] mt-[8px]" />
      </TabStrip>

      <div className="flex h-[120px] shrink-0 border-b-2 border-[#1a1a1a] bg-[#3c3c3c]">
        <div className="flex w-[70px] shrink-0 flex-col pl-[15px] pt-[21px]">
          <CubeLine w={40} h={42} s={1.6} /><Down className="-mt-px ml-[38px]" />
        </div>
        <div className="flex flex-1 flex-col">
          <div className="mt-[18px] flex h-[36px] items-center">
            <Field className="ml-[22px] size-[28px] justify-center"><Check /></Field>
            <Field className="ml-[13px] h-[36px] w-[507px] pl-[4px] font-semibold">Map2</Field>
            <div className="ml-[6px] flex size-[28px] items-center justify-center rounded-[5px] border-2 border-[#3a79bb] bg-[#2a2a2a]"><Check /></div>
            <span className="ml-[8px] w-[65px] text-[#80aefb]">Static</span><Down className="ml-[6px]" />
          </div>
          <div className="mt-[12px] flex h-[36px] items-center">
            <span className="ml-[14px] mt-[2px] w-[53px] text-[#b8b8b8]">Tag</span>
            <div className="flex h-[36px] w-[276px] items-center justify-between rounded-[5px] border-2 border-[#303030] border-b-[#242424] bg-[#515151] pl-[5px] pr-[9px] text-[#e4e4e4]"><span>Untagged</span><Down /></div>
            <span className="ml-[29px] mt-[2px] w-[73px] text-[#b8b8b8]">Layer</span>
            <div className="flex h-[36px] w-[256px] items-center justify-between rounded-[5px] border-2 border-[#303030] border-b-[#242424] bg-[#515151] pl-[5px] pr-[9px] text-[#e4e4e4]"><span>Default</span><Down /></div>
          </div>
        </div>
      </div>

      <div className="flex h-[42px] shrink-0 items-center border-b-2 border-[#303030] bg-[#3e3e3e]">
        <FoldOpen className="ml-[12px] mt-px" />
        <Svg w={26} h={23} className="ml-[14px] -mt-[2px]">
          <path d="M13 2.500V9.500" stroke="#b1fd59" strokeWidth="5" strokeLinecap="round" /><path d="M9 17L3.500 20.500" stroke="#7fd6fd" strokeWidth="5" strokeLinecap="round" /><path d="M17 16.500L22.500 20" stroke="#ff6d40" strokeWidth="5" strokeLinecap="round" />
        </Svg>
        <span className="ml-[51px] font-semibold">Transform</span>
        <div className="ml-auto mr-[23px] flex items-center">
          <Svg w={20} h={20}><circle cx="10" cy="10" r="10" fill={C} /><path d="M6.800 7.500Q7 4.500 10 4.500Q13.300 4.500 13.300 7.300Q13.300 9 11.500 10Q10 11 10 12.500" stroke="#3e3e3e" strokeWidth="2.200" /><circle cx="10" cy="15.500" r="1.500" fill="#3e3e3e" /></Svg>
          <Svg w={20} h={20} className="ml-[20px]"><path d="M0 5.500H14M17 5.500H20M14 0V10M7 15H20M0 15H3M7 10V20" stroke={C} strokeWidth="2.400" /></Svg>
          <Dots className="ml-[27px]" />
        </div>
      </div>
      <div className="h-[144px] shrink-0 border-b-2 border-[#1a1a1a] pt-[6px]">
        <VectorRow label="Position" value="0" />
        <VectorRow label="Rotation" value="0" />
        <VectorRow label="Scale" value="1" />
      </div>
      <div className="ml-[161px] mt-[17px] flex h-[47px] w-[457px] shrink-0 items-center justify-center rounded-[5px] border-2 border-[#303030] border-b-[#242424] bg-[#585858] pb-[4px] tracking-[-0.2px] text-[#eeeeee]">Add Component</div>
    </div>
  );
}

export default function App() {
  return (
    <div className="flex h-[1240px] w-[3832px] flex-col overflow-hidden bg-[#191919] font-['Inter',sans-serif] text-[24px] leading-[30px] text-[#d0d0d0]">
      <TopBar />
      <div className="flex h-[1182px] gap-[4px] overflow-hidden">
        <ScenePanel />
        <HierarchyPanel />
        <ProjectPanel />
        <InspectorPanel />
      </div>
    </div>
  );
}
